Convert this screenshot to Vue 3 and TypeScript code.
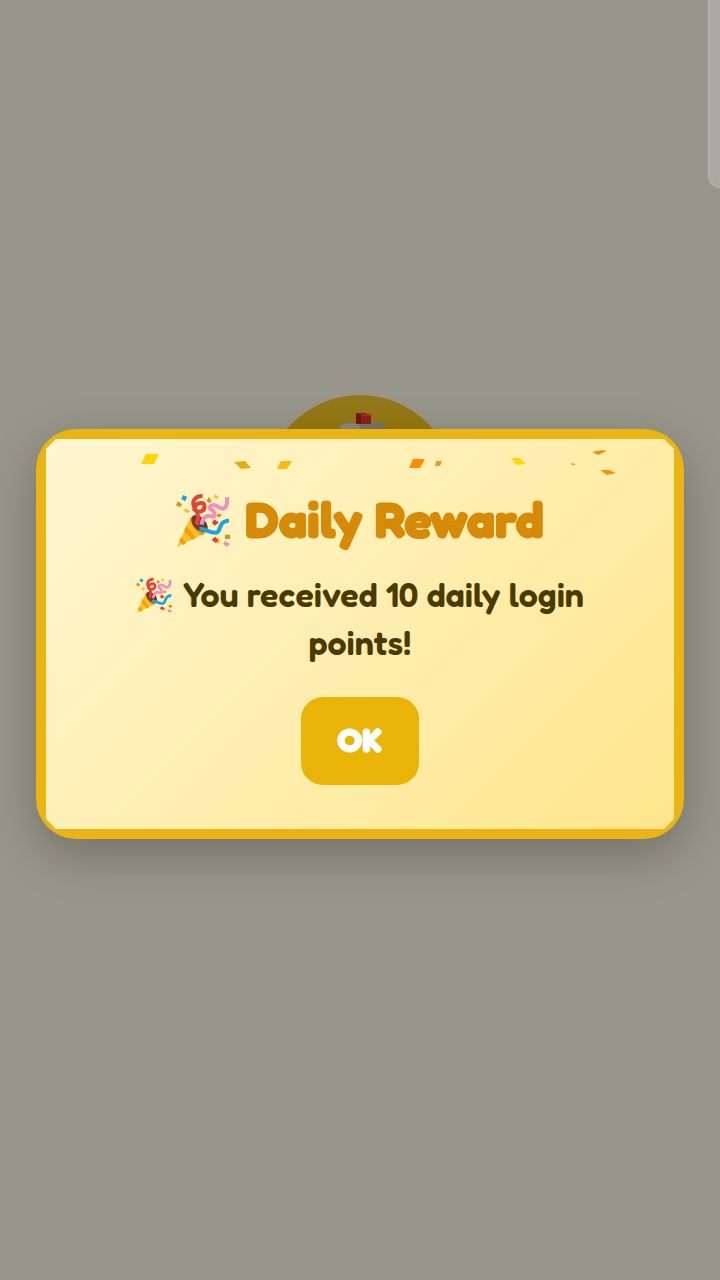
<script setup lang="ts">
interface Piece {
  points: string
  color: string
}

const confetti: Piece[] = [
  { points: '100,15 113,15 108,25 95,25', color: '#ffd500' },
  { points: '188,23 199,22 205,29 195,30', color: '#e4ae0e' },
  { points: '235,22 246,22 241,30 231,30', color: '#fcb80c' },
  { points: '367,20 379,20 374,29 363,29', color: '#ff8c00' },
  { points: '390,22 396,22 394,27 389,27', color: '#ee9a20' },
  { points: '465,19 474,19 480,25 470,26', color: '#ffd60a' },
  { points: '524,25 527,24 530,26 527,26', color: '#ee9a20' },
  { points: '546,13 556,11 561,12 552,16', color: '#ec9416' },
  { points: '554,31 563,31 570,34 561,36', color: '#ee9414' },
]
</script>

<template>
  <main class="page">
    <aside class="panel"></aside>
    <svg class="mascot" viewBox="0 0 190 190" aria-hidden="true">
      <defs>
        <linearGradient id="disc" x1="0" y1="0" x2="0" y2="1">
          <stop offset="0" stop-color="#93791c" />
          <stop offset="0.25" stop-color="#94780b" />
        </linearGradient>
      </defs>
      <circle cx="95" cy="95" r="95" fill="url(#disc)" />
      <path d="M74 36V31Q75 28 85 27L115 27Q121 28 121 36Z" fill="#777565" />
      <path d="M74 31Q83 26 93 29L98 36H77Z" fill="#8d8976" />
      <path d="M91 18l9 0 6 2v9H91Z" fill="#8d201b" />
      <path d="M91 18l5 2v9l-5-1Z" fill="#701512" />
      <path d="M97 20h9" fill="none" stroke="#a7423c" />
    </svg>

    <svg class="symbols" aria-hidden="true">
      <symbol id="popper" viewBox="0 0 54 54">
        <path d="M1 53 14 24Q17 21 24 26Q34 34 31 38Z" fill="#fcc21b" />
        <path d="M10 32 20 44 16 46 8 37ZM5 43 10 49 7 51 3 47Z" fill="#f29c1f" />
        <path d="M14 24Q20 27 23 34T31 38L25 42Q14 35 14 24Z" fill="#e89b20" />
        <ellipse cx="23" cy="30" rx="6" ry="10" transform="rotate(-43 23 30)" fill="#75372d" />
        <path d="M20 31C22 26 22 20 19 16C14 8 19 3 26 3M18 15C20 9 28 8 28 13C28 19 21 20 17 15" fill="none" stroke="#df4537" stroke-width="4" />
        <path d="M25 31C26 24 30 21 35 23C40 25 38 17 34 16C31 14 36 9 42 14C49 18 51 11 50 4" fill="none" stroke="#ed91bb" stroke-width="4" />
        <path d="M23 35C29 35 32 39 39 39C45 39 40 28 52 27" fill="none" stroke="#16a7e2" stroke-width="4" />
        <path d="M7 2 11 4 9 8 5 6Z" fill="#16a7e2" />
        <path d="M2 8 6 11 4 14 0 12ZM32 4 35 7 33 10 30 8ZM41 20 45 21 43 24 40 23ZM48 41 53 41 53 45 48 45Z" fill="#d49320" />
        <path d="M10 15 14 18 11 20 7 17ZM38 1 42 4 40 6 37 5ZM40 44 44 47 41 50 38 47Z" fill="#fac136" />
        <path d="M38 26 42 29 38 32 35 29ZM38 43 42 46 39 49 35 46Z" fill="#dc4138" />
        <path d="M48 47 53 50 50 53 46 50Z" fill="#e992bd" />
      </symbol>
    </svg>

    <section class="dialog" role="dialog" aria-modal="true" aria-labelledby="reward-title">
      <div class="content">
        <svg class="confetti" viewBox="0 0 628 50" preserveAspectRatio="xMidYMin meet" aria-hidden="true">
          <polygon v-for="piece in confetti" :key="piece.points" :points="piece.points" :fill="piece.color" />
        </svg>
        <h1 id="reward-title" class="title">
          <svg class="emoji" aria-hidden="true"><use href="#popper" /></svg>
          Daily Reward
        </h1>
        <p class="message">
          <svg class="emoji" aria-hidden="true"><use href="#popper" /></svg>
          You received 10 daily login points!
        </p>
        <button class="confirm" type="button">OK</button>
      </div>
    </section>
  </main>
</template>

<style>
body {
  margin: 0;
  background: #98968a;
}
</style>

<style scoped>
.page {
  position: relative;
  box-sizing: border-box;
  display: flex;
  align-items: center;
  justify-content: center;
  min-height: 100vh;
  padding: 0 5% 12px;
  overflow: hidden;
  background: #98968a;
  font-family: Fredoka, "Fredoka One", Lato, "Open Sans", sans-serif;
}

.panel {
  position: absolute;
  top: -12px;
  right: -12px;
  box-sizing: border-box;
  width: 24px;
  height: 200px;
  border: 2px solid #b1b0a9;
  border-radius: 14px;
  background: #a9a8a2;
}

.mascot {
  position: absolute;
  top: calc(50% - 245px);
  left: calc(50% - 95px);
  width: 190px;
  height: 190px;
}

.symbols {
  position: absolute;
  width: 0;
  height: 0;
}

.dialog {
  position: relative;
  box-sizing: border-box;
  width: 100%;
  padding: 10px;
  border-radius: 40px;
  background: #eab414;
  box-shadow: 0 16px 48px rgb(0 0 0 / 24%);
}

.content {
  position: relative;
  display: flex;
  flex-direction: column;
  align-items: center;
  padding: 44px;
  background: linear-gradient(135deg, #fff7d2, #ffe58c);
  clip-path: polygon(10px 0, calc(100% - 10px) 0, 100% 10px, 100% calc(100% - 10px), calc(100% - 10px) 100%, 10px 100%, 0 calc(100% - 10px), 0 10px);
  text-align: center;
}

.confetti {
  position: absolute;
  top: 0;
  left: 0;
  width: 100%;
}

.title {
  margin: 0 0 16px;
  color: #d58a08;
  font-size: 51px;
  font-weight: 700;
  line-height: 72px;
  -webkit-text-stroke: 1px #d58a08;
}

.message {
  margin: 0 0 30px;
  color: #4b3a00;
  font-size: 34px;
  font-weight: 600;
  line-height: 48px;
}

.emoji {
  width: 1.08em;
  height: 1.08em;
  margin-right: 2px;
  vertical-align: -0.19em;
}

.confirm {
  min-width: 118px;
  height: 88px;
  padding: 0 34px 4px;
  border: 0;
  border-radius: 22px;
  background: #eab308;
  color: #fff;
  font-family: inherit;
  font-size: 34px;
  font-weight: 700;
  -webkit-text-stroke: 1px #fff;
}
</style>
